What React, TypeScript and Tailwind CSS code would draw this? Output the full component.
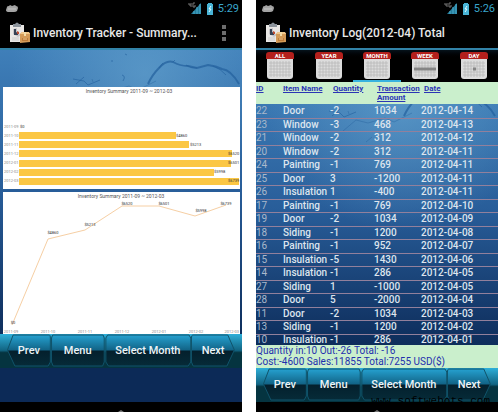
import type { ReactNode } from "react";

const rows: [number, string, number, number, string][] = [
  [22, "Door", -2, 1034, "2012-04-14"],
  [23, "Window", -3, 468, "2012-04-13"],
  [21, "Window", -2, 312, "2012-04-12"],
  [20, "Window", -2, 312, "2012-04-11"],
  [24, "Painting", -1, 769, "2012-04-11"],
  [25, "Door", 3, -1200, "2012-04-11"],
  [26, "Insulation", 1, -400, "2012-04-11"],
  [17, "Painting", -1, 769, "2012-04-10"],
  [19, "Door", -2, 1034, "2012-04-09"],
  [18, "Siding", -1, 1200, "2012-04-08"],
  [16, "Painting", -1, 952, "2012-04-07"],
  [15, "Insulation", -5, 1430, "2012-04-06"],
  [14, "Insulation", -1, 286, "2012-04-05"],
  [27, "Siding", 1, -1000, "2012-04-05"],
  [28, "Door", 5, -2000, "2012-04-04"],
  [11, "Door", -2, 1034, "2012-04-03"],
  [13, "Siding", -1, 1200, "2012-04-02"],
  [10, "Insulation", -1, 286, "2012-04-01"],
];

const bars = [
  { month: "2011-09", width: 0, label: "$0", labelX: 17 },
  { month: "2011-10", width: 157, label: "$4860", labelX: 173 },
  { month: "2011-11", width: 170, label: "$5213", labelX: 187 },
  { month: "2011-12", width: 213, label: "$6520", labelX: 225 },
  { month: "2012-01", width: 212, label: "$6501", labelX: 225 },
  { month: "2012-02", width: 195, label: "$5998", labelX: 211 },
  { month: "2012-03", width: 220, label: "$6739", labelX: 225 },
];

const points = [
  { month: "2011-09", x: 9, y: 133, label: "$0", labelX: 10, labelY: 132 },
  { month: "2011-10", x: 45, y: 47, label: "$4860", labelX: 50, labelY: 42 },
  { month: "2011-11", x: 82, y: 38, label: "$5213", labelX: 87, labelY: 34 },
  { month: "2011-12", x: 119, y: 14, label: "$6520", labelX: 124, labelY: 13 },
  { month: "2012-01", x: 156, y: 14, label: "$6501", labelX: 161, labelY: 13 },
  { month: "2012-02", x: 192, y: 24, label: "$5998", labelX: 198, labelY: 20 },
  { month: "2012-03", x: 223, y: 13, label: "$6739", labelX: 223, labelY: 13 },
];

function StatusBar({ time }: { time: string }) {
  return (
    <div className="flex h-[17px] items-center gap-1 pr-[3px] pl-[6px]">
      <svg viewBox="0 0 12 9" className="h-[9px] w-3" aria-hidden="true">
        <path d="M1 3q0-1 2-1l1-1 2 1 3-1 1 1q2 0 2 2l-1 3q-1 1-3 1H3Q0 8 0 6z" fill="#a3a3a3" />
        <path d="M2 5h8" stroke="#c4c4c4" />
      </svg>
      <span className="grow" />
      <svg viewBox="0 0 14 13" className="h-[13px] w-[14px]" aria-hidden="true">
        <path d="M13 1v11H3z" fill="#267d9b" />
        <path d="M9 5v7M6 9v3M12 2v10" stroke="#4aaccc" />
        <path d="M1 1v2h2M3 1v4M7 1H5v4h2V3" fill="none" stroke="#777" />
      </svg>
      <svg viewBox="0 0 8 12" className="h-3 w-2" aria-hidden="true">
        <path d="M2 0h4v1h1v11H1V1h1z" fill="#49b4d6" />
        <path d="M5 3L3 6h2L3 9" fill="none" stroke="#e6fbff" />
      </svg>
      <span className="text-[11px] leading-[17px] text-[#39a5cb]">{time}</span>
    </div>
  );
}

function AppIcon() {
  return (
    <svg viewBox="0 0 22 22" className="h-[22px] w-[22px] shrink-0" aria-hidden="true">
      <path d="M1 3h14v17H1z" fill="#e9e7e5" />
      <path d="M4 2h2q2-3 4 0h2v3H4z" fill="#8c939b" />
      <path d="M4 7l4-1v4l4 3-3 2-5-3z" fill="#c5c3c6" />
      <path d="M5 7h2v3l2 1v2H5z" fill="#354154" />
      <path d="M8 9l2 1v2H8z" fill="#bc4b32" />
      <path d="M3 16h7M3 18h7" stroke="#cccccc" />
      <path d="M11 12l2-2 8 1v9l-10 1z" fill="#d49b58" />
      <path d="M11 12h10l-1-2h-7z" fill="#f0c88c" />
      <path d="M15 10h2v4h-2z" fill="#f3dca9" />
      <path d="M13 16h6v3h-6z" fill="#bd7c3a" />
      <path d="M14 17h4" stroke="#edc58c" />
    </svg>
  );
}

function TitleBar({ title, menu }: { title: string; menu?: boolean }) {
  return (
    <header className="flex h-[33px] items-center gap-[2px] border-b-2 border-[#3283a8] pl-[9px]">
      <AppIcon />
      <h1 className="grow text-[12px] leading-4 font-medium whitespace-nowrap text-[#e8e8e8]">{title}</h1>
      {menu && (
        <button type="button" aria-label="More options" className="mr-4 flex flex-col gap-[2px]">
          <span className="size-1 bg-[#6d6d6d]" />
          <span className="size-1 bg-[#6d6d6d]" />
          <span className="size-1 bg-[#6d6d6d]" />
        </button>
      )}
    </header>
  );
}

function Water() {
  return (
    <svg viewBox="0 0 242 120" className="absolute inset-x-0 top-0 w-full" fill="none" stroke="#225f9c" aria-hidden="true">
      <path d="M148 34q4-9 11-16 7-8 14-6 7 4 15 4l9 2 11-3q8 1 14 4 9 1 17 15" strokeWidth="2" opacity=".7" />
      <path d="M159 18l4-5M173 12l2-2M186 15q6 4 11 3M213 16q8 3 13 9M73 29l11 2 4 4 12-5M122 25q4 1 1 6M112 10v2M125 4l2 1M76 34l8-7" opacity=".6" />
      <path d="M87 49l13-11 12 3 17-5 9 4 18-9M110 60l6-5M57 73l4 2M92 29l1 3" opacity=".4" />
    </svg>
  );
}

function Scene({ children }: { children: ReactNode }) {
  return (
    <div className="relative flex grow flex-col bg-linear-to-b from-[#3f7fb9] via-[#285d99] via-40% to-[#0c2a57] to-85%">
      <div className="absolute inset-x-0 top-0 h-[160px] bg-[radial-gradient(ellipse_at_60%_15%,#69a7d199,transparent_65%)]" />
      <Water />
      <div className="relative flex grow flex-col">{children}</div>
    </div>
  );
}

function BarButton({ label, shape }: { label: string; shape: "left" | "middle" | "right" }) {
  const outline =
    shape === "left"
      ? "M14 1H97Q99 1 99 4V28L94 32H18L1 16Z"
      : shape === "right"
        ? "M1 4Q1 1 4 1H84L99 16L82 32H5L1 28Z"
        : "M3 1H97L99 4V28L96 32H4L1 28V4Z";
  return (
    <button type="button" className="relative h-[34px] text-[11px] leading-[34px] font-medium whitespace-nowrap text-[#edf4f7]">
      <svg viewBox="0 0 100 34" preserveAspectRatio="none" className="absolute inset-0 size-full" aria-hidden="true">
        <defs>
          <linearGradient id={`fill-${shape}`} x1="0" y1="0" x2="0" y2="1">
            <stop offset="0" stopColor="#25a1d0" />
            <stop offset=".48" stopColor="#126487" />
            <stop offset=".52" stopColor="#04202d" />
            <stop offset="1" stopColor="#062b38" />
          </linearGradient>
        </defs>
        <path d={outline} fill={`url(#fill-${shape})`} stroke="#10536a" vectorEffect="non-scaling-stroke" />
      </svg>
      <span className="relative">{label}</span>
    </button>
  );
}

function ButtonBar() {
  return (
    <nav className="grid h-[34px] grid-cols-[44fr_54fr_87fr_44fr] bg-linear-to-b from-[#2eafd9] via-[#126583] via-48% to-[#053440] to-55% px-[7px]">
      <BarButton label="Prev" shape="left" />
      <BarButton label="Menu" shape="middle" />
      <BarButton label="Select Month" shape="middle" />
      <BarButton label="Next" shape="right" />
    </nav>
  );
}

function SystemBar() {
  return (
    <div className="flex h-[10px] items-end justify-center bg-black" aria-hidden="true">
      <svg viewBox="0 0 8 2" className="h-[2px] w-2">
        <path d="M1 2l3-2 3 2z" fill="#777" />
      </svg>
    </div>
  );
}

function BarChart() {
  return (
    <svg viewBox="0 0 237 102" className="block w-full bg-white" role="img" aria-label="Inventory summary bars" fontSize="4">
      <text x="126" y="6" fontSize="5" textAnchor="middle" fill="#555">Inventory Summary 2011-09 ~ 2012-03</text>
      {bars.map((bar, i) => (
        <g key={bar.month}>
          <text x="1" y={41 + i * 9} fill="#888">{bar.month}</text>
          <rect x="16" y={36 + i * 9 + (i > 3 ? 1 : 0)} width={bar.width} height="7" fill="#fbc744" />
          <text x={bar.labelX} y={41 + i * 9} fill="#333">{bar.label}</text>
        </g>
      ))}
    </svg>
  );
}

function LineChart() {
  return (
    <svg viewBox="0 0 237 142" className="block w-full bg-white" role="img" aria-label="Inventory summary line" fontSize="4">
      <text x="118" y="6" fontSize="5" textAnchor="middle" fill="#555">Inventory Summary 2011-09 ~ 2012-03</text>
      <polyline points={points.map((p) => `${p.x},${p.y}`).join(" ")} fill="none" stroke="#f6cfa4" />
      {points.map((p, i) => (
        <g key={p.month} textAnchor="middle">
          <text x={p.labelX} y={p.labelY} fill="#333">{p.label}</text>
          <text x={8 + i * 37} y="141" textAnchor={i === 6 ? "end" : "middle"} dx={i === 6 ? 6 : 0} fill="#888">{p.month}</text>
        </g>
      ))}
    </svg>
  );
}

function CalendarIcon({ name }: { name: string }) {
  return (
    <svg viewBox="0 0 28 28" className="h-7 w-7" aria-hidden="true">
      <rect x="1" y="1" width="26" height="26" rx="3" fill="#dcdcdc" />
      <path d="M0 7V3q0-3 3-3h22q3 0 3 3v4z" fill="#b3201c" />
      <path d="M3 11h22M3 14h22M3 17h22M3 20h22M3 23h22M5 9v16M8 9v16M11 9v16M14 9v16M17 9v16M20 9v16M23 9v16" stroke="#b5b5b5" strokeWidth=".7" />
      {name === "WEEK" && <path d="M3 17h22" stroke="#858585" strokeWidth="3" />}
      {name === "DAY" && <path d="M13 17h3" stroke="#858585" strokeWidth="3" />}
      <text x="14" y="6" textAnchor="middle" fontSize="6" fontWeight="bold" fill="#fff">{name}</text>
    </svg>
  );
}

function PeriodTabs() {
  return (
    <div role="tablist" className="grid h-8 grid-cols-5 bg-linear-to-b from-[#06121a] to-black to-30%">
      {["ALL", "YEAR", "MONTH", "WEEK", "DAY"].map((name) => (
        <button
          key={name}
          type="button"
          role="tab"
          aria-label={name}
          aria-selected={name === "MONTH"}
          className={`flex items-start justify-center pt-[2px] ${name === "MONTH" ? "border-b-3 border-[#38b3df]" : ""}`}
        >
          <CalendarIcon name={name} />
        </button>
      ))}
    </div>
  );
}

function LogTable() {
  return (
    <div className="h-[263px] overflow-hidden">
      <table className="w-full table-fixed border-collapse text-left">
        <colgroup>
          <col className="w-[27px]" />
          <col className="w-[47px]" />
          <col className="w-[44px]" />
          <col className="w-[47px]" />
          <col />
        </colgroup>
        <thead>
          <tr className="h-[22px] bg-[#caefcc] align-top text-[8px] leading-[9px] text-[#2b35b5]">
            <th className="p-0 pt-[2px]"><a href="#id" className="underline">ID</a></th>
            <th className="p-0 pt-[2px] whitespace-nowrap"><a href="#name" className="underline">Item Name</a></th>
            <th className="p-0 pt-[2px] pl-[3px]"><a href="#quantity" className="underline">Quantity</a></th>
            <th className="p-0 pt-[2px] pl-[3px]"><a href="#amount" className="underline">Transaction Amount</a></th>
            <th className="p-0 pt-[2px] pl-[3px]"><a href="#date" className="underline">Date</a></th>
          </tr>
        </thead>
        <tbody className="text-[10px] leading-[12px] font-medium text-[#dde5ee]">
          {rows.map(([id, name, quantity, amount, date], i) => (
            <tr
              key={id}
              className={
                i === rows.length - 1
                  ? "h-[9px] leading-[9px]"
                  : `border-b border-[#92809c] ${i % 2 === 1 ? "h-[13px]" : "h-[14px]"}`
              }
            >
              <td className="p-0 font-normal text-[#a9b9cc]">{id}</td>
              <td className="p-0">{name}</td>
              <td className="p-0">{quantity}</td>
              <td className="p-0">{amount}</td>
              <td className="p-0">{date}</td>
            </tr>
          ))}
        </tbody>
      </table>
    </div>
  );
}

export default function App() {
  return (
    <main className="flex gap-[14px] bg-white pr-[2px] font-['Roboto','Liberation_Sans',sans-serif]">
      <section className="flex min-w-0 flex-1 flex-col bg-black">
        <StatusBar time="5:29" />
        <TitleBar title="Inventory Tracker - Summary..." menu />
        <Scene>
          <div className="flex flex-col gap-[3px] px-[3px] pt-[37px] pr-[2px]">
            <BarChart />
            <LineChart />
          </div>
          <ButtonBar />
        </Scene>
        <SystemBar />
      </section>
      <section className="relative flex min-w-0 flex-1 flex-col bg-black">
        <StatusBar time="5:26" />
        <TitleBar title="Inventory Log(2012-04) Total" />
        <PeriodTabs />
        <Scene>
          <LogTable />
          <footer className="h-[23px] bg-[#caefcc] text-[10px] leading-[11px] whitespace-nowrap text-[#1f2fae]">
            <p>Quantity in:10 Out:-26 Total: -16</p>
            <p>Cost:-4600 Sales:11855 Total:7255 USD($)</p>
          </footer>
          <ButtonBar />
        </Scene>
        <SystemBar />
        <span className="absolute right-[8px] bottom-[5px] font-['Liberation_Mono',monospace] text-[11px] leading-3 text-black">www.softwebots.com</span>
      </section>
    </main>
  );
}
